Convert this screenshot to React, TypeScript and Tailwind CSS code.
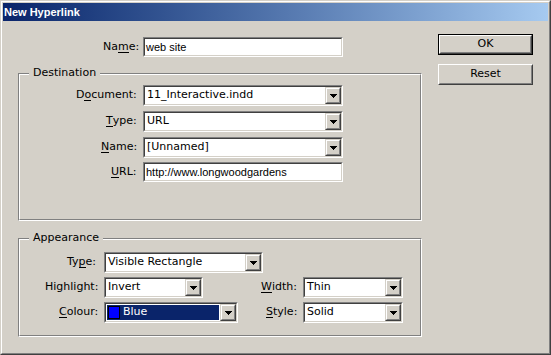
import type { ReactNode } from "react";

function Lbl({ text, u, className = "" }: { text: string; u: number; className?: string }) {
  if (u < 0) return <span className={`shrink-0 whitespace-pre ${className}`}>{text}</span>;
  return (
    <span className={`shrink-0 whitespace-pre ${className}`}>
      {text.slice(0, u)}
      <span className="inline-block border-b border-black leading-[10px]">{text[u]}</span>
      {text.slice(u + 1)}
    </span>
  );
}

function Arrow() {
  return (
    <svg width="7" height="4" viewBox="0 0 7 4" shapeRendering="crispEdges">
      <rect x="0" y="0" width="7" height="1" fill="#000" />
      <rect x="1" y="1" width="5" height="1" fill="#000" />
      <rect x="2" y="2" width="3" height="1" fill="#000" />
      <rect x="3" y="3" width="1" height="1" fill="#000" />
    </svg>
  );
}

function Sunken({ className = "", children }: { className?: string; children: ReactNode }) {
  return (
    <div className={`flex border border-t-[#808080] border-l-[#808080] border-r-white border-b-white ${className}`}>
      <div className="flex flex-1 min-w-0 border border-t-[#404040] border-l-[#404040] border-r-[#d4d0c8] border-b-[#d4d0c8] bg-white">
        {children}
      </div>
    </div>
  );
}

function DropButton() {
  return (
    <div className="w-[16px] border border-t-[#d4d0c8] border-l-[#d4d0c8] border-r-[#404040] border-b-[#404040]">
      <div className="flex h-full items-center justify-center border border-t-white border-l-white border-r-[#808080] border-b-[#808080] bg-[#d4d0c8]">
        <Arrow />
      </div>
    </div>
  );
}

function Combo({ value, className = "" }: { value: string; className?: string }) {
  return (
    <Sunken className={`h-[21px] ${className}`}>
      <div className="flex flex-1 items-center pl-[2px] text-[11px] font-['DejaVu_Sans',sans-serif]">{value}</div>
      <DropButton />
    </Sunken>
  );
}

function ColourCombo() {
  return (
    <Sunken className="h-[21px] w-[134px]">
      <div className="flex flex-1 items-center gap-[3px] m-[1px] bg-[#0a246a] pl-[1px] text-[11px] text-white font-['DejaVu_Sans',sans-serif]">
        <span className="h-[13px] w-[12px] border border-black bg-[#0000ff]" />
        Blue
      </div>
      <DropButton />
    </Sunken>
  );
}

function TextField({ value }: { value: string }) {
  return (
    <Sunken className="h-[20px] w-[200px]">
      <div className="flex flex-1 items-center pl-[1px] text-[11px] font-['Liberation_Sans',Arial,sans-serif]">{value}</div>
    </Sunken>
  );
}

function Group({ title, className = "", children }: { title: string; className?: string; children: ReactNode }) {
  return (
    <div className={`relative border border-t-[#808080] border-l-[#808080] border-r-white border-b-white ${className}`}>
      <div className="h-full border border-t-white border-l-white border-r-[#808080] border-b-[#808080]">{children}</div>
      <span className="absolute left-[10px] top-[-8px] bg-[#d4d0c8] px-[4px] leading-[13px]">{title}</span>
    </div>
  );
}

function Button({ label, isDefault }: { label: string; isDefault?: boolean }) {
  const face = (
    <div className="h-full border border-t-white border-l-white border-r-[#404040] border-b-[#404040]">
      <div className="flex h-full items-center justify-center border border-t-[#d4d0c8] border-l-[#d4d0c8] border-r-[#808080] border-b-[#808080] bg-[#d4d0c8]">
        {label}
      </div>
    </div>
  );
  if (isDefault) return <div className="h-[21px] w-[95px] border border-black">{face}</div>;
  return <div className="h-[21px] w-[95px]">{face}</div>;
}

export default function App() {
  return (
    <div className="h-[355px] w-[551px] border border-t-[#d4d0c8] border-l-[#d4d0c8] border-r-[#404040] border-b-[#404040] bg-[#d4d0c8] text-[11px] text-black font-['DejaVu_Sans',sans-serif]">
      <div className="h-full border border-t-white border-l-white border-r-[#808080] border-b-[#808080] p-[1px]">
        <div className="flex h-[18px] items-center bg-gradient-to-r from-[#0a246a] to-[#a6caf0] pl-[1px] text-[11px] font-bold text-white font-['Liberation_Sans',Arial,sans-serif]">
          New Hyperlink
        </div>

        <div className="flex pl-[15px] pt-[13px]">
          <div className="w-[404px] pt-[3px]">
            <div className="flex h-[20px] items-center">
              <Lbl text="Name:" u={2} className="w-[125px] pl-[85px]" />
              <TextField value="web site" />
            </div>

            <Group title="Destination" className="mt-[16px] h-[148px]">
              <div className="flex flex-col gap-[5px] pt-[10px]">
                <div className="flex items-center gap-[6px]">
                  <Lbl text="Document:" u={1} className="w-[117px] pl-[56px]" />
                  <Combo value="11_Interactive.indd" className="w-[200px]" />
                </div>
                <div className="flex items-center gap-[6px]">
                  <Lbl text="Type:" u={0} className="w-[117px] pl-[86px]" />
                  <Combo value="URL" className="w-[200px]" />
                </div>
                <div className="flex items-center gap-[6px]">
                  <Lbl text="Name:" u={0} className="w-[117px] pl-[81px]" />
                  <Combo value="[Unnamed]" className="w-[200px]" />
                </div>
                <div className="-mt-[1px] flex items-center gap-[6px]">
                  <Lbl text="URL:" u={0} className="w-[117px] pl-[91px]" />
                  <TextField value="http://www.longwoodgardens" />
                </div>
              </div>
            </Group>

            <Group title="Appearance" className="mt-[17px] h-[99px]">
              <div className="flex flex-col gap-[4px] pt-[12px]">
                <div className="flex items-center gap-[6px]">
                  <Lbl text="Type:" u={2} className="w-[78px] pl-[47px]" />
                  <Combo value="Visible Rectangle" className="w-[159px]" />
                </div>
                <div className="flex items-center">
                  <Lbl text="Highlight:" u={-1} className="w-[78px] pl-[25px]" />
                  <Combo value="Invert" className="ml-[6px] w-[99px]" />
                  <Lbl text="Width:" u={0} className="w-[94px] pl-[58px]" />
                  <Combo value="Thin" className="ml-[6px] w-[100px]" />
                </div>
                <div className="flex items-center">
                  <Lbl text="Colour:" u={0} className="w-[78px] pl-[39px]" />
                  <div className="ml-[6px]">
                    <ColourCombo />
                  </div>
                  <Lbl text="Style:" u={0} className="w-[59px] pl-[28px]" />
                  <Combo value="Solid" className="ml-[6px] w-[100px]" />
                </div>
              </div>
            </Group>
          </div>

          <div className="ml-[16px] flex flex-col gap-[9px]">
            <Button label="OK" isDefault />
            <Button label="Reset" />
          </div>
        </div>
      </div>
    </div>
  );
}
